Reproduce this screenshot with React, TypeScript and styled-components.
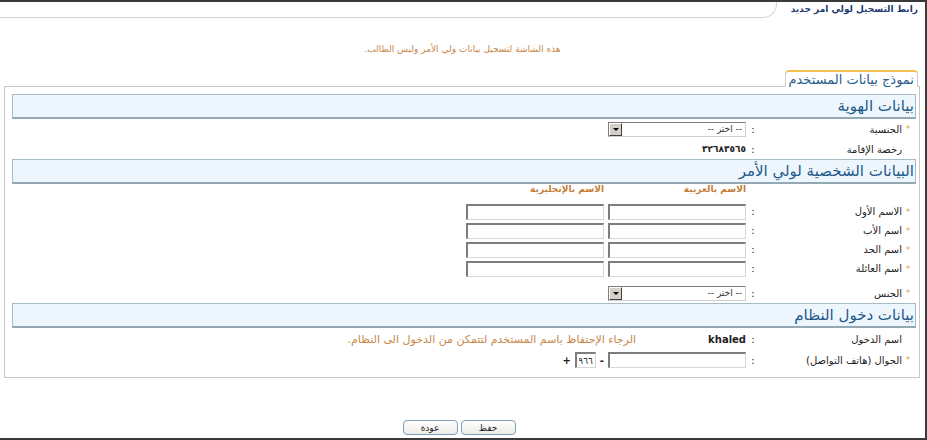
import styled, { createGlobalStyle } from 'styled-components';

const GlobalStyle = createGlobalStyle`
  html, body {
    margin: 0;
    padding: 0;
    background: #fff;
  }
  body {
    font-family: "DejaVu Sans", "Noto Sans", sans-serif;
  }
  * {
    box-sizing: border-box;
  }
`;

const Page = styled.div`
  width: 927px;
  height: 440px;
  direction: rtl;
  border-top: 2px solid #3a3a3a;
  border-right: 2px solid #3a3a3a;
  border-bottom: 2px solid #3a3a3a;
  display: flex;
  flex-direction: column;
  background: #fff;
`;

const TitleBar = styled.div`
  display: flex;
  height: 16px;
`;

const TitleText = styled.div`
  padding: 0 7px 0 14px;
  color: #1d3a72;
  font-size: 9px;
  font-weight: bold;
  line-height: 14px;
  white-space: nowrap;
`;

const TitleFiller = styled.div`
  flex: 1;
  border-bottom: 1px solid #d4d4d4;
  border-right: 1px solid #d4d4d4;
  border-bottom-right-radius: 14px;
`;

const Notice = styled.p`
  margin: 24px 0 0;
  text-align: center;
  color: #c8884a;
  font-size: 9px;
  line-height: 14px;
`;

const TabRow = styled.div`
  display: flex;
  margin: 14px 7px 0 0;
  position: relative;
  z-index: 1;
`;

const Tab = styled.div`
  height: 17px;
  padding: 0 3px;
  margin-bottom: -1px;
  background: #fff;
  border-top: 2px solid #f2c04c;
  border-left: 1px solid #cfcfcf;
  border-right: 1px solid #cfcfcf;
  border-radius: 4px 4px 0 0;
  color: #2b5c8c;
  font-size: 13px;
  line-height: 15px;
  white-space: nowrap;
`;

const Panel = styled.div`
  margin: 0 5px 0 4px;
  border: 1px solid #c8c8c8;
  padding: 7px 3px 7px 7px;
`;

const SectionHeader = styled.div`
  height: 25px;
  padding: 0 1px;
  background: #eef6fd;
  border: 1px solid #a9bac4;
  border-bottom: 2px solid #93a8b3;
  color: #24598b;
  font-size: 15px;
  line-height: 22px;
  white-space: nowrap;
`;

const FieldRow = styled.div<{ $h: number; $top?: number; $align?: string }>`
  display: grid;
  grid-template-columns: 156px 14px 1fr;
  height: ${({ $h }) => $h}px;
  margin-top: ${({ $top }) => $top || 0}px;
  align-items: ${({ $align }) => $align || 'center'};
  font-size: 10px;
  color: #222;
`;

const Label = styled.div`
  display: flex;
  align-items: center;
  padding-right: 2px;
  white-space: nowrap;
`;

const Star = styled.span`
  display: inline-block;
  width: 12px;
  text-align: center;
  color: #e3a35a;
  font-size: 9px;
`;

const Colon = styled.div`
  text-align: center;
`;

const Value = styled.div`
  display: flex;
  align-items: center;
  gap: 4px;
  white-space: nowrap;
`;

const ColHead = styled.span`
  width: 138px;
  color: #c47d36;
  font-size: 9px;
  font-weight: bold;
  line-height: 11px;
`;

const TextBox = styled.input<{ $w?: number }>`
  width: ${({ $w }) => $w || 138}px;
  height: 16px;
  margin: 0;
  padding: 0 2px;
  background: #fff;
  border-top: 2px solid #7d7d7d;
  border-left: 2px solid #7d7d7d;
  border-right: 1px solid #d6d6d6;
  border-bottom: 1px solid #d6d6d6;
  font-family: "DejaVu Sans", sans-serif;
  font-size: 9px;
  color: #333;
  outline: none;
`;

const SelectBox = styled.div`
  width: 138px;
  height: 15px;
  display: flex;
  align-items: center;
  border-top: 1px solid #7d7d7d;
  border-left: 1px solid #7d7d7d;
  border-right: 1px solid #cfcfcf;
  border-bottom: 1px solid #cfcfcf;
  background: #fff;
`;

const SelectText = styled.span`
  padding-right: 3px;
  font-size: 9px;
  color: #333;
`;

const SelectButton = styled.span`
  margin-right: auto;
  width: 13px;
  height: 13px;
  background: #d4d0c8;
  border-top: 1px solid #fff;
  border-left: 1px solid #fff;
  border-right: 1px solid #404040;
  border-bottom: 1px solid #404040;
  display: flex;
  align-items: center;
  justify-content: center;
`;

const Arrow = styled.span`
  width: 0;
  height: 0;
  border-left: 3px solid transparent;
  border-right: 3px solid transparent;
  border-top: 3px solid #000;
`;

const Strong = styled.span<{ $size?: number }>`
  font-weight: bold;
  font-size: ${({ $size }) => $size || 10}px;
  color: #222;
`;

const Hint = styled.span`
  margin-right: 68px;
  color: #c8884a;
  font-size: 11px;
`;

const Sign = styled.span`
  font-weight: bold;
  font-size: 10px;
  color: #222;
`;

const Footer = styled.div`
  display: flex;
  justify-content: center;
  gap: 3px;
  margin-top: 42px;
  padding-right: 7px;
`;

const Button = styled.button`
  width: 55px;
  height: 15px;
  padding: 0;
  border: 1px solid #7f9db9;
  border-radius: 4px;
  background: linear-gradient(#ffffff, #ecebe6);
  font-family: "DejaVu Sans", sans-serif;
  font-size: 9px;
  line-height: 12px;
  color: #222;
`;

function Select() {
  return (
    <SelectBox>
      <SelectText>-- اختر --</SelectText>
      <SelectButton><Arrow /></SelectButton>
    </SelectBox>
  );
}

const nameRows = ['الاسم الأول', 'اسم الأب', 'اسم الجد', 'اسم العائلة'];

export default function App() {
  return (
    <>
      <GlobalStyle />
      <Page>
        <TitleBar>
          <TitleText>رابط التسجيل لولي امر جديد</TitleText>
          <TitleFiller />
        </TitleBar>

        <Notice>هذه الشاشة لتسجيل بيانات ولي الأمر وليس الطالب.</Notice>

        <TabRow>
          <Tab>نموذج بيانات المستخدم</Tab>
        </TabRow>

        <Panel>
          <SectionHeader>بيانات الهوية</SectionHeader>
          <FieldRow $h={20}>
            <Label><Star>*</Star>الجنسية</Label>
            <Colon>:</Colon>
            <Value><Select /></Value>
          </FieldRow>
          <FieldRow $h={20}>
            <Label><Star />رخصة الإقامة</Label>
            <Colon>:</Colon>
            <Value><Strong $size={9}>٣٢٦٨٣٥٦٥</Strong></Value>
          </FieldRow>

          <SectionHeader>البيانات الشخصية لولي الأمر</SectionHeader>
          <FieldRow $h={18} $align="start">
            <div />
            <div />
            <Value>
              <ColHead>الاسم بالعربية</ColHead>
              <ColHead>الاسم بالإنجليزية</ColHead>
            </Value>
          </FieldRow>
          {nameRows.map((label) => (
            <FieldRow key={label} $h={19}>
              <Label><Star>*</Star>{label}</Label>
              <Colon>:</Colon>
              <Value>
                <TextBox type="text" />
                <TextBox type="text" />
              </Value>
            </FieldRow>
          ))}
          <FieldRow $h={20} $top={5}>
            <Label><Star>*</Star>الجنس</Label>
            <Colon>:</Colon>
            <Value><Select /></Value>
          </FieldRow>

          <SectionHeader>بيانات دخول النظام</SectionHeader>
          <FieldRow $h={22}>
            <Label><Star />اسم الدخول</Label>
            <Colon>:</Colon>
            <Value>
              <Strong>khaled</Strong>
              <Hint>الرجاء الإحتفاظ باسم المستخدم لتتمكن من الدخول الى النظام.</Hint>
            </Value>
          </FieldRow>
          <FieldRow $h={20}>
            <Label><Star>*</Star>الجوال (هاتف التواصل)</Label>
            <Colon>:</Colon>
            <Value>
              <TextBox type="text" />
              <Sign>-</Sign>
              <TextBox type="text" $w={21} defaultValue="٩٦٦" />
              <Sign>+</Sign>
            </Value>
          </FieldRow>
        </Panel>

        <Footer>
          <Button type="button">حفظ</Button>
          <Button type="button">عودة</Button>
        </Footer>
      </Page>
    </>
  );
}
